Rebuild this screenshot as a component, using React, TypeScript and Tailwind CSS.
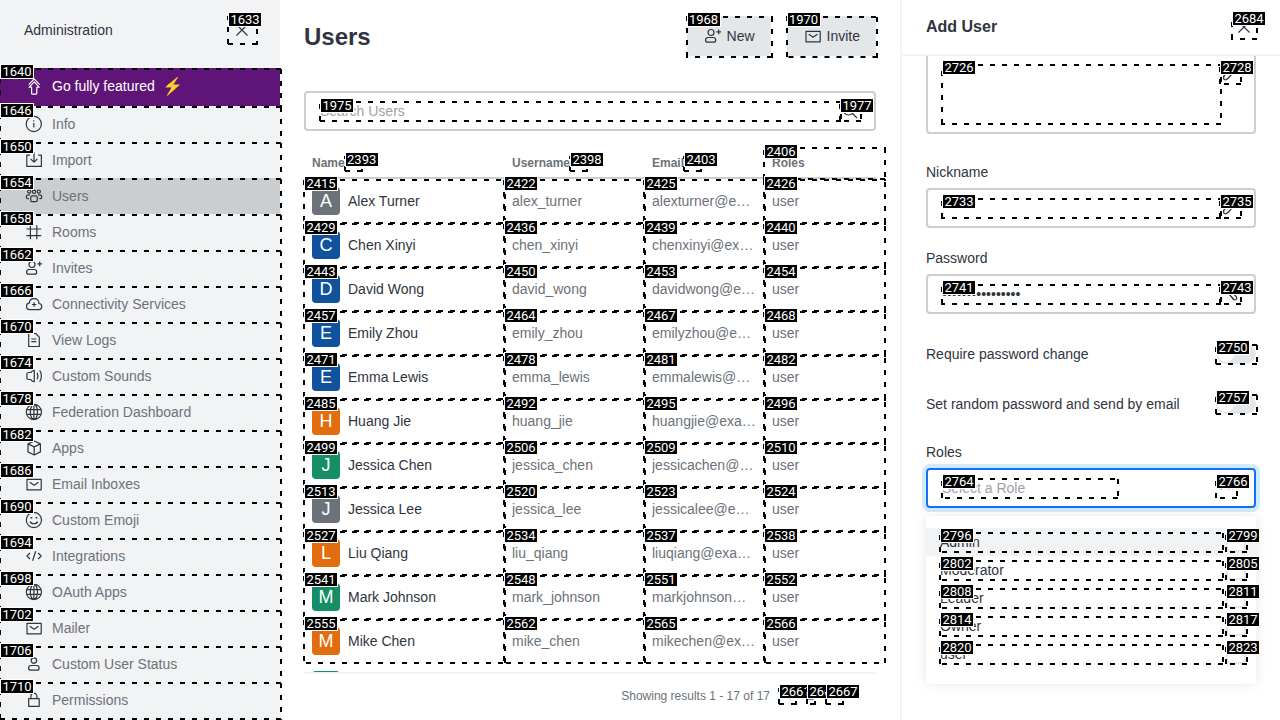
import React from "react";

type TagProps = { id: number; className?: string; label?: string; phase?: string };

const ringPhase = "[background-position:left_top,right_bottom,right_top,left_bottom]";
const cellPhase = "[background-position:left_top,9px_100%,100%_2px,0_7px]";

/* Numbered dashed frame drawn over the element that contains it. */
function Tag({
  id,
  className = "-left-px top-0 -right-0.5 -bottom-0.5",
  label = "-top-1",
  phase = ringPhase,
}: TagProps) {
  return (
    <span
      className={`pointer-events-none absolute z-10 ${className} ${phase} [background-image:linear-gradient(90deg,transparent_1px,#000_1px,#000_6px,transparent_6px),linear-gradient(270deg,transparent_1px,#000_1px,#000_6px,transparent_6px),linear-gradient(180deg,transparent_1px,#000_1px,#000_6px,transparent_6px),linear-gradient(0deg,transparent_1px,#000_1px,#000_6px,transparent_6px)] [background-size:12px_2px,12px_2px,2px_12px,2px_12px] [background-repeat:repeat-x,repeat-x,repeat-y,repeat-y]`}
    >
      <span
        className={`absolute left-px flex h-[15px] w-[34px] items-center justify-center border border-white bg-black font-['Roboto',sans-serif] text-[13px] leading-[13px] font-normal text-white ${label}`}
      >
        {id}
      </span>
    </span>
  );
}

const icons: Record<string, React.ReactNode> = {
  close: <path d="M4.5 4.5l11 11M15.5 4.5l-11 11" />,
  upgrade: (
    <>
      <path d="M4.8 8.6L10.2 2.8l5.4 5.8" />
      <path d="M10.2 5.8l5 5.4h-2.4v6a1 1 0 0 1-1 1H8.6a1 1 0 0 1-1-1v-6H5.2z" />
    </>
  ),
  info: (
    <>
      <circle cx="9.8" cy="10" r="7.6" />
      <path d="M9.8 9v4.6M9.8 6.2v1.2" />
    </>
  ),
  import: <path d="M6 5.2H2.8v11.2h14.6V5.2h-3.2M10 2.5v9.6M6.6 8.8l3.4 3.4 3.4-3.4" />,
  users: (
    <>
      <circle cx="5.2" cy="5.6" r="1.6" />
      <circle cx="10" cy="5.8" r="1.7" />
      <circle cx="14.8" cy="5.6" r="1.6" />
      <path d="M8.8 9.8h2.6c1.2 0 1.9.9 1.9 2v2.4c0 .9-.5 1.4-1.4 1.4H8.1c-.9 0-1.4-.5-1.4-1.4v-2.4c0-1.1.8-2 2.1-2z" />
      <path d="M6 8.8H4.4c-1.2 0-2 .9-2 2v.8c0 .7.4 1.1 1.1 1.1h1.3M14 8.8h1.7c1.2 0 2 .9 2 2v.8c0 .7-.4 1.1-1.1 1.1h-1.3" />
    </>
  ),
  hash: <path d="M6.4 3.3v14M12.8 3.3v14M2.4 7h14.8M2.4 13.7h14.8" />,
  userPlus: (
    <>
      <circle cx="8" cy="6.5" r="3" />
      <path d="M5.2 11.5h5c1.5 0 2.5 1.2 2.5 2.7 0 1.4-.7 2-2 2H4.6c-1.4 0-2-.6-2-2 0-1.5 1-2.7 2.6-2.7zM15.7 3.4v4.8M13.3 5.8h4.8" />
    </>
  ),
  cloud: (
    <path d="M5.6 15.6h9c1.9 0 3.2-1.2 3.2-3s-1.2-3-2.9-3.1c.2-3-2-4.9-4.7-4.9-2.6 0-4.7 1.7-4.8 4.3C3.6 9.2 2.5 10.5 2.5 12.3c0 2 1.2 3.3 3.1 3.3zM10.1 8.3v4.4M7.9 10.5h4.4" />
  ),
  file: <path d="M4.7 3.5h7l3.6 3.7v9.3H4.7zM7.3 9h5M7.3 11.6h5" />,
  sound: (
    <path d="M10.3 4.3v11.4c-1.8 0-2.8-.9-3.4-2.2H4.6c-1 0-1.7-.7-1.7-1.7V8.2c0-1 .7-1.7 1.7-1.7h2.3c.6-1.3 1.6-2.2 3.4-2.2zM13.2 6.8c1 2.2 1 4.2 0 6.4M15.7 4.3c2.3 3.8 2.3 7.6 0 11.4" />
  ),
  globe: (
    <path d="M2.3 10a7.6 7.6 0 1 0 15.2 0a7.6 7.6 0 1 0-15.2 0M6.3 10a3.6 7.6 0 1 0 7.2 0a3.6 7.6 0 1 0-7.2 0M9.9 2.4v15.2M3 7.6h13.8M3 12.4h13.8" />
  ),
  cube: <path d="M10.2 3l6.2 2.9v8L10.2 17 4 13.9v-8zM4 5.9l6.2 3 6.2-3M10.2 8.9V17" />,
  mail: <path d="M3 5.4h14.2v10.4H3zM5.8 8.2l4.3 3 4.3-3" />,
  smile: (
    <>
      <circle cx="9.9" cy="10" r="7.6" />
      <path d="M6.2 11.5c.8 3 6.6 3 7.4 0" />
      <path d="M7.4 7v1.6M12.4 7v1.6" strokeWidth="1.8" />
    </>
  ),
  code: <path d="M6 7l-3 3 3 3M14.2 7l3 3-3 3M11.7 5.2L8.6 14.8" />,
  user: (
    <>
      <circle cx="9.9" cy="6.6" r="2.7" />
      <path d="M7.2 11.5h5.4c1.5 0 2.5 1.2 2.5 2.7 0 1.4-.7 2-2 2H6.6c-1.4 0-2-.6-2-2 0-1.5 1-2.7 2.6-2.7z" />
    </>
  ),
  lock: <path d="M4.7 8.7h10.5v7.6H4.7zM6.9 8.7V6.2a3 3 0 0 1 6 0v2.5" />,
  search: (
    <>
      <circle cx="8.5" cy="8.5" r="5.5" />
      <path d="M12.5 12.5l4.5 4.5" />
    </>
  ),
  pencil: <path d="M3.5 12.5L12 3.5c2-1.5 4.5 1 3 3L8 14.5c-2.5 2.5-5.5 1-4-2z" />,
  eyeOff: <path d="M4 4l10 12M7 8l7 7.500c1.500 1 3.500-.5 2.500-2.500L10 6M3 9c3-4 10-5 14 1" />,
  sort: <path d="M6.500 8L10 4.500 13.500 8M6.500 11.500L10 15l3.500-3.500" />,
  chevronUp: <path d="M5 11.300L9.200 7l4.200 4.300" />,
  chevronLeft: <path d="M14 5.500L9.500 10l4.500 4.500" />,
  chevronRight: <path d="M7 5.500l4.500 4.500L7 14.500" />,
};

function Icon({ name, size = "size-5" }: { name: string; size?: string }) {
  return (
    <svg
      viewBox="0 0 20 20"
      className={`${size} shrink-0`}
      fill="none"
      stroke="currentColor"
      strokeWidth="1.2"
      strokeLinejoin="round"
      aria-hidden="true"
    >
      {icons[name]}
    </svg>
  );
}

const navItems: [number, string, string][] = [
  [1646, "info", "Info"],
  [1650, "import", "Import"],
  [1654, "users", "Users"],
  [1658, "hash", "Rooms"],
  [1662, "userPlus", "Invites"],
  [1666, "cloud", "Connectivity Services"],
  [1670, "file", "View Logs"],
  [1674, "sound", "Custom Sounds"],
  [1678, "globe", "Federation Dashboard"],
  [1682, "cube", "Apps"],
  [1686, "mail", "Email Inboxes"],
  [1690, "smile", "Custom Emoji"],
  [1694, "code", "Integrations"],
  [1698, "globe", "OAuth Apps"],
  [1702, "mail", "Mailer"],
  [1706, "user", "Custom User Status"],
  [1710, "lock", "Permissions"],
];

const gray = "bg-[#6c727a]";
const blue = "bg-[#10529e]";
const orange = "bg-[#e26d0e]";
const green = "bg-[#158d65]";

type Row = { ids: [number, number, number, number]; name: string; username: string; email: string; color: string };

const rows: Row[] = [
  { ids: [2415, 2422, 2425, 2426], name: "Alex Turner", username: "alex_turner", email: "alexturner@example.com", color: gray },
  { ids: [2429, 2436, 2439, 2440], name: "Chen Xinyi", username: "chen_xinyi", email: "chenxinyi@example.com", color: blue },
  { ids: [2443, 2450, 2453, 2454], name: "David Wong", username: "david_wong", email: "davidwong@example.com", color: blue },
  { ids: [2457, 2464, 2467, 2468], name: "Emily Zhou", username: "emily_zhou", email: "emilyzhou@example.com", color: blue },
  { ids: [2471, 2478, 2481, 2482], name: "Emma Lewis", username: "emma_lewis", email: "emmalewis@example.com", color: blue },
  { ids: [2485, 2492, 2495, 2496], name: "Huang Jie", username: "huang_jie", email: "huangjie@example.com", color: orange },
  { ids: [2499, 2506, 2509, 2510], name: "Jessica Chen", username: "jessica_chen", email: "jessicachen@example.com", color: green },
  { ids: [2513, 2520, 2523, 2524], name: "Jessica Lee", username: "jessica_lee", email: "jessicalee@example.com", color: gray },
  { ids: [2527, 2534, 2537, 2538], name: "Liu Qiang", username: "liu_qiang", email: "liuqiang@example.com", color: orange },
  { ids: [2541, 2548, 2551, 2552], name: "Mark Johnson", username: "mark_johnson", email: "markjohnson@example.com", color: green },
  { ids: [2555, 2562, 2565, 2566], name: "Mike Chen", username: "mike_chen", email: "mikechen@example.com", color: orange },
];

const roles: [number, number, string][] = [
  [2796, 2799, "Admin"],
  [2802, 2805, "Moderator"],
  [2808, 2811, "Leader"],
  [2814, 2817, "Owner"],
  [2820, 2823, "user"],
];

function Sidebar() {
  return (
    <aside className="relative z-10 w-[280px] shrink-0 bg-[#f2f3f5]">
      <div className="flex h-[68px] items-start justify-between pt-4 pr-6 pl-6">
        <h2 className="leading-7">Administration</h2>
        <button aria-label="Close administration" className="relative flex size-7 items-center justify-center">
          <Icon name="close" />
          <Tag id={1633} className="-left-px top-0 -right-0.5 -bottom-px" />
        </button>
      </div>
      <nav>
        <a href="#upgrade" className="relative flex h-[38px] items-center gap-2 bg-[#5f1477] px-6 pb-0.5 text-white">
          <Icon name="upgrade" />
          <span>Go fully featured</span>
          <span className="font-['Noto_Color_Emoji',sans-serif] text-[17px] leading-5">⚡</span>
          <Tag id={1640} />
        </a>
        {navItems.map(([id, icon, label]) => (
          <a
            key={id}
            href={`#${id}`}
            className={`relative flex h-9 items-center gap-2 px-6 ${label === "Users" ? "bg-[#cbced1]" : ""}`}
          >
            <Icon name={icon} />
            <span className="text-[#6c727a]">{label}</span>
            <Tag id={id} label="-top-[3px]" />
          </a>
        ))}
      </nav>
    </aside>
  );
}

function SortHeader({ id, label }: { id: number; label: string }) {
  return (
    <th className="h-8 border-b-2 border-[#cbced1] px-2 pt-0.5 pb-0 text-left align-middle">
      <div className="flex items-center">
        {label}
        <button aria-label={`Sort by ${label}`} className="relative size-4">
          <Icon name="sort" size="size-4" />
          <Tag id={id} className="-left-px top-px -right-0.5 -bottom-px" />
        </button>
      </div>
    </th>
  );
}

function Main() {
  return (
    <main className="flex min-w-0 flex-1 flex-col px-6">
      <header className="flex items-center justify-between pt-4 pb-[35px]">
        <h1 className="pt-0.5 text-2xl font-bold">Users</h1>
        <div className="flex gap-4">
          <button className="relative flex h-10 items-center gap-1 rounded bg-[#e4e7ea] px-4">
            <Icon name="userPlus" />
            New
            <Tag id={1968} />
          </button>
          <button className="relative flex h-10 items-center gap-1 rounded bg-[#e4e7ea] px-4">
            <Icon name="mail" />
            Invite
            <Tag id={1970} />
          </button>
        </div>
      </header>
      <div className="flex h-10 shrink-0 items-center rounded border-2 border-[#cbced1] px-3.5">
        <label className="relative flex-1">
          <input
            type="text"
            placeholder="Search Users"
            aria-label="Search Users"
            className="block h-5 w-full outline-none placeholder:text-[#9ea2a8]"
          />
          <Tag id={1975} className="-left-px top-0 -right-0.5 -bottom-px" label="-top-[3px]" />
        </label>
        <span className="relative size-5">
          <Icon name="search" />
          <Tag id={1977} className="-left-px top-0 -right-0.5 -bottom-px" label="-top-[3px]" />
        </span>
      </div>
      <div className="-mx-6 min-h-0 flex-1 overflow-hidden px-6 pt-4">
        <table className="w-full table-fixed border-separate border-spacing-0">
          <colgroup>
            <col className="w-[200px]" />
            <col className="w-[140px]" />
            <col className="w-[120px]" />
            <col />
          </colgroup>
          <thead className="text-xs text-[#6c727a]">
            <tr>
              <SortHeader id={2393} label="Name" />
              <SortHeader id={2398} label="Username" />
              <SortHeader id={2403} label="Email" />
              <th className="relative border-b-2 border-[#cbced1] px-2 pt-0.5 pb-0 text-left align-middle">
                Roles
                <Tag id={2406} className="-left-px top-0 -right-2.5 -bottom-[3px]" label="-top-[3px]" />
              </th>
            </tr>
          </thead>
          <tbody className="text-[#6c727a]">
            {rows.map((r) => (
              <tr key={r.username} className="h-11">
                <td className="relative px-2 py-0">
                  <div className="flex items-center gap-2">
                    <span
                      className={`flex size-7 items-center justify-center rounded text-lg leading-none text-white ${r.color}`}
                    >
                      {r.name[0]}
                    </span>
                    <span className="text-[#2f343d]">{r.name}</span>
                  </div>
                  <Tag id={r.ids[0]} className="-left-px top-0 -right-0.5 -bottom-px" label="-top-[3px]" phase={cellPhase} />
                </td>
                <td className="relative px-2 py-0">
                  <div className="truncate">{r.username}</div>
                  <Tag id={r.ids[1]} className="-left-px top-0 -right-0.5 -bottom-px" label="-top-[3px]" phase={cellPhase} />
                </td>
                <td className="relative px-2 py-0">
                  <div className="truncate">{r.email}</div>
                  <Tag id={r.ids[2]} className="-left-px top-0 -right-0.5 -bottom-px" label="-top-[3px]" phase={cellPhase} />
                </td>
                <td className="relative px-2 py-0">
                  user
                  <Tag id={r.ids[3]} className="-left-px top-0 -right-2.5 -bottom-px" label="-top-[3px]" phase={cellPhase} />
                </td>
              </tr>
            ))}
            <tr className="h-11">
              <td className="px-2 py-0" colSpan={4}>
                <span className={`block size-7 rounded ${green}`} />
              </td>
            </tr>
          </tbody>
        </table>
      </div>
      <footer className="flex h-12 shrink-0 items-center justify-end border-t-2 border-[#f2f3f5] pr-[34px] pb-0.5 text-xs text-[#6c727a]">
        <span className="mr-[9px]">Showing results 1 - 17 of 17</span>
        <div className="flex gap-3">
          <button aria-label="Previous page" className="relative size-4">
            <Icon name="chevronLeft" size="size-4" />
            <Tag id={2661} className="-left-px top-0 -right-0.5 -bottom-px" />
          </button>
          <button className="relative w-[7px]">
            1
            <Tag id={2664} className="-left-px top-0 -right-0.5 -bottom-px" />
          </button>
          <button aria-label="Next page" className="relative size-4">
            <Icon name="chevronRight" size="size-4" />
            <Tag id={2667} className="-left-px top-0 -right-0.5 -bottom-px" />
          </button>
        </div>
      </footer>
    </main>
  );
}

type FieldProps = { label: string; type: string; value?: string; ids: [number, number]; icon: string };

function Field({ label, type, value, ids, icon }: FieldProps) {
  return (
    <label className="flex flex-col gap-1.5">
      <span>{label}</span>
      <span className="flex h-10 items-center rounded border-2 border-[#cbced1] px-3.5">
        <span className="relative flex-1">
          <input type={type} defaultValue={value} className="block h-5 w-full outline-none" />
          <Tag id={ids[0]} className="-left-px top-0 -right-0.5 -bottom-px" />
        </span>
        <span className="relative size-5">
          <Icon name={icon} />
          <Tag id={ids[1]} className="-left-px top-0 -right-0.5 -bottom-px" />
        </span>
      </span>
    </label>
  );
}

function Toggle({ id, label }: { id: number; label: string }) {
  return (
    <label className="flex h-5 items-center justify-between">
      <span>{label}</span>
      <span className="relative h-5 w-10">
        <input type="checkbox" className="block h-5 w-10 appearance-none rounded-full bg-[#e4e7ea]" />
        <span className="absolute top-0.5 left-0.5 size-4 rounded-full bg-white" />
        <Tag id={id} className="-left-px top-0 -right-0.5 -bottom-px" />
      </span>
    </label>
  );
}

function AddUser() {
  return (
    <aside className="flex w-[380px] shrink-0 flex-col border-l-2 border-[#f2f3f5]">
      <header className="flex h-14 shrink-0 items-center justify-between border-b-2 border-[#f2f3f5] px-6">
        <h2 className="text-base font-bold">Add User</h2>
        <button aria-label="Close panel" className="relative flex size-6 items-center justify-center">
          <Icon name="close" />
          <Tag id={2684} className="-left-px top-0 -right-0.5 -bottom-px" />
        </button>
      </header>
      <form className="min-h-0 flex-1 overflow-hidden px-6">
        <div className="mb-7 flex h-[78px] rounded-b border-2 border-t-0 border-[#cbced1] px-3.5 pt-2">
          <span className="relative h-[60px] flex-1">
            <textarea aria-label="Bio" className="block h-full w-full resize-none outline-none" />
            <Tag id={2726} className="-left-px top-0 -right-0.5 -bottom-px" />
          </span>
          <span className="relative size-5">
            <Icon name="pencil" />
            <Tag id={2728} className="-left-px top-0 -right-0.5 -bottom-px" />
          </span>
        </div>
        <div className="flex flex-col gap-5">
          <Field label="Nickname" type="text" ids={[2733, 2735]} icon="pencil" />
          <Field label="Password" type="password" value="password12345678" ids={[2741, 2743]} icon="eyeOff" />
        </div>
        <div className="mt-[30px] mb-7 flex flex-col gap-[30px]">
          <Toggle id={2750} label="Require password change" />
          <Toggle id={2757} label="Set random password and send by email" />
        </div>
        <label htmlFor="roles" className="block">
          Roles
        </label>
        <div className="mt-1.5 flex h-10 items-center justify-between rounded border-2 border-[#156ff5] pr-4 pl-3.5 ring-4 ring-[#d1ebfe]">
          <span className="relative w-[176px]">
            <input
              id="roles"
              type="text"
              placeholder="Select a Role"
              className="block h-5 w-full outline-none placeholder:text-[#9ea2a8]"
            />
            <Tag id={2764} className="-left-px top-0 -right-px -bottom-px" />
          </span>
          <span className="relative mr-0.5 size-5">
            <Icon name="chevronUp" />
            <Tag id={2766} className="-left-px top-0 -right-0.5 -bottom-px" />
          </span>
        </div>
        <div className="mt-2 rounded bg-white pt-3 pb-4 shadow-[0_0_12px_rgba(47,52,61,0.12)]">
          {roles.map(([id, boxId, label]) => (
            <label
              key={id}
              className={`flex h-7 items-center gap-1 pr-2.5 pl-3.5 ${label === "Admin" ? "bg-[#f2f3f5]" : ""}`}
            >
              <span className="relative flex-1">
                {label}
                <Tag id={id} className="-left-px top-0 -right-0.5 -bottom-px" />
              </span>
              <span className="relative size-5">
                <input type="checkbox" className="block size-5 appearance-none rounded-sm border-2 border-[#e4e7ea] bg-white" />
                <Tag id={boxId} className="-left-px top-0 -right-0.5 -bottom-px" />
              </span>
            </label>
          ))}
        </div>
      </form>
    </aside>
  );
}

export default function App() {
  return (
    <div className="flex h-screen overflow-hidden bg-white font-['Liberation_Sans',Arial,sans-serif] text-sm text-[#2f343d]">
      <Sidebar />
      <Main />
      <AddUser />
    </div>
  );
}
